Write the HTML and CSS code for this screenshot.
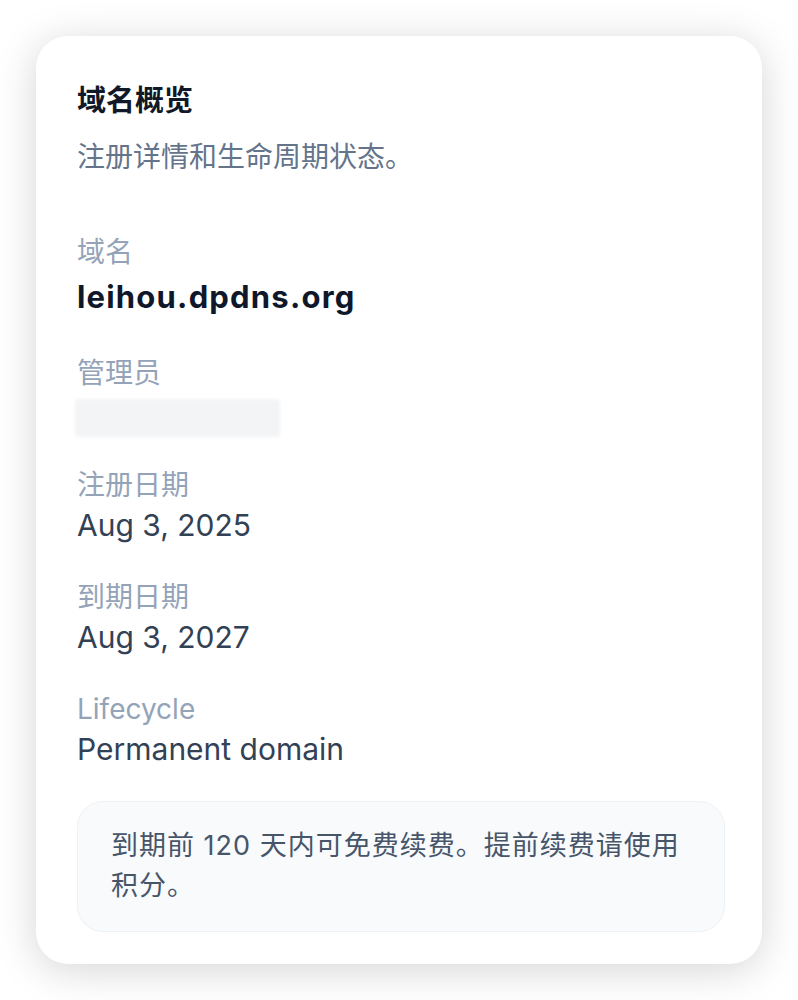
FILE: index.html
```html
<!DOCTYPE html>
<html lang="zh-CN">
<head>
<meta charset="utf-8">
<title>域名概览</title>
<link rel="stylesheet" href="styles.css">
</head>
<body>
<div class="card">
  <h1 class="title">域名概览</h1>
  <p class="subtitle">注册详情和生命周期状态。</p>
  <div class="fields">
    <div class="field">
      <div class="label">域名</div>
      <div class="value domain">leihou.dpdns.org</div>
    </div>
    <div class="field">
      <div class="label">管理员</div>
      <div class="value admin"><div class="redacted"></div></div>
    </div>
    <div class="field">
      <div class="label">注册日期</div>
      <div class="value">Aug 3, 2025</div>
    </div>
    <div class="field">
      <div class="label">到期日期</div>
      <div class="value">Aug 3, 2027</div>
    </div>
    <div class="field">
      <div class="label">Lifecycle</div>
      <div class="value">Permanent domain</div>
    </div>
  </div>
  <div class="note">到期前 120 天内可免费续费。提前续费请使用积分。</div>
</div>
</body>
</html>
```
FILE: styles.css
```css
html, body {
  margin: 0;
  padding: 0;
  background: #ffffff;
}
body {
  font-family: Inter, "Noto Sans CJK SC", sans-serif;
  padding: 36px;
  width: 726px;
}
.card {
  box-sizing: border-box;
  width: 726px;
  background: #ffffff;
  border-radius: 32px;
  box-shadow: 0 6px 40px rgba(0, 0, 0, 0.17);
  padding: 45px 37px 32px 41px;
}
.title {
  margin: 0;
  font-size: 29px;
  line-height: 40px;
  font-weight: 700;
  color: #111827;
}
.subtitle {
  margin: 16px 0 0;
  font-size: 28px;
  line-height: 40px;
  color: #64748b;
}
.fields {
  margin-top: 55px;
  display: flex;
  flex-direction: column;
  gap: 32px;
}
.label {
  font-size: 28px;
  line-height: 40px;
  color: #94a3b8;
}
.value {
  font-size: 30px;
  line-height: 40px;
  color: #334155;
}
.domain {
  font-size: 31px;
  line-height: 49px;
  font-weight: 700;
  letter-spacing: 1.2px;
  color: #0f172a;
}
.admin {
  height: 40px;
  padding-top: 6px;
  box-sizing: border-box;
}
.redacted {
  margin-left: -2px;
  width: 205px;
  height: 38px;
  background: #f3f4f6;
  border-radius: 4px;
  filter: blur(1.5px);
}
.note {
  margin-top: 32px;
  background: #f8fafc;
  border: 1px solid #eef2f6;
  border-radius: 26px;
  padding: 24px 40px 25px 33px;
  font-size: 27px;
  line-height: 40px;
  letter-spacing: 1px;
  color: #475569;
}
```
